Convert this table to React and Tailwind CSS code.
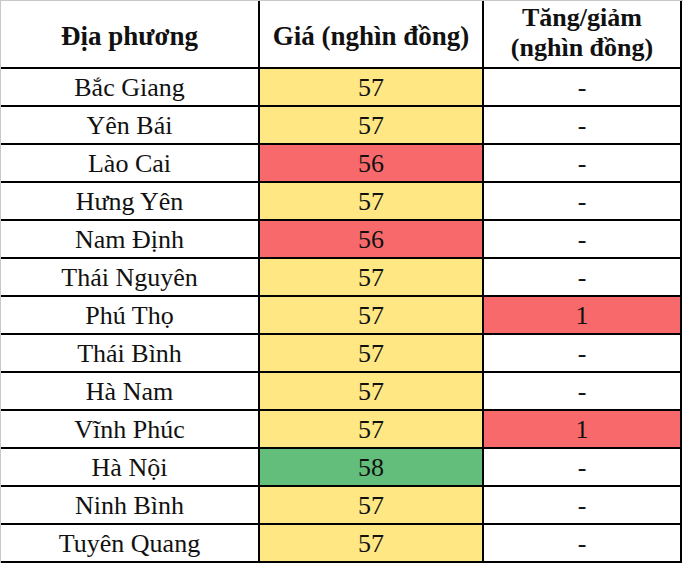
import React from "react";

const Y = "bg-[#ffe784]";
const R = "bg-[#f8696b]";
const G = "bg-[#63be7b]";

const rows = [
  ["Bắc Giang", "57", Y, "-", ""],
  ["Yên Bái", "57", Y, "-", ""],
  ["Lào Cai", "56", R, "-", ""],
  ["Hưng Yên", "57", Y, "-", ""],
  ["Nam Định", "56", R, "-", ""],
  ["Thái Nguyên", "57", Y, "-", ""],
  ["Phú Thọ", "57", Y, "1", R],
  ["Thái Bình", "57", Y, "-", ""],
  ["Hà Nam", "57", Y, "-", ""],
  ["Vĩnh Phúc", "57", Y, "1", R],
  ["Hà Nội", "58", G, "-", ""],
  ["Ninh Bình", "57", Y, "-", ""],
  ["Tuyên Quang", "57", Y, "-", ""],
];

export default function App() {
  return (
    <div className="w-[690px] h-[570px] bg-white text-[#111] font-['Liberation_Serif','Times_New_Roman',serif]">
      <div className="w-[683px] border-t border-l border-[#c8c8c8] grid grid-cols-[259px_224px_198px]">
        <div className="h-[68px] border-r-2 border-b-2 border-black flex items-center justify-center pt-[5px] font-bold text-[27px] leading-none">
          Địa phương
        </div>
        <div className="h-[68px] border-r-2 border-b-2 border-black flex items-center justify-center pt-[5px] font-bold text-[27px] leading-none">
          Giá (nghìn đồng)
        </div>
        <div className="h-[68px] border-r-2 border-b-2 border-black flex flex-col items-center justify-center font-bold text-[26px] leading-[30px] pb-[2px]">
          <span>Tăng/giảm</span>
          <span>(nghìn đồng)</span>
        </div>
        {rows.map(([name, price, pc, chg, cc]) => (
          <React.Fragment key={name}>
            <div className="h-[38px] border-r-2 border-b-2 border-black flex items-center justify-center pt-[1px] text-[26px] leading-none">
              {name}
            </div>
            <div className={`h-[38px] border-r-2 border-b-2 border-black flex items-center justify-center pt-[1px] text-[26px] leading-none ${pc}`}>
              {price}
            </div>
            <div className={`h-[38px] border-r-2 border-b-2 border-black flex items-center justify-center pt-[1px] text-[26px] leading-none ${cc}`}>
              {chg}
            </div>
          </React.Fragment>
        ))}
      </div>
    </div>
  );
}
